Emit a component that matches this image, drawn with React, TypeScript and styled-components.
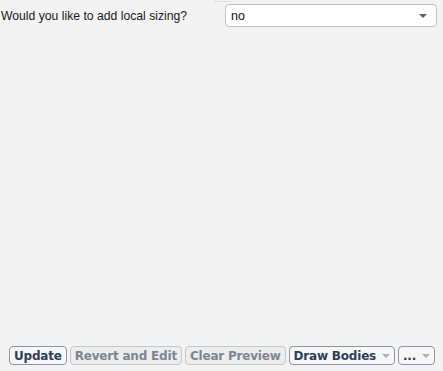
import React from "react";
import styled, { createGlobalStyle } from "styled-components";

const Global = createGlobalStyle`
  html, body { margin: 0; padding: 0; background: #f3f3f3; }
  body { width: 443px; height: 371px; overflow: hidden; font-family: "DejaVu Sans", "Liberation Sans", sans-serif; }
  #root { height: 371px; }
`;

const Page = styled.div`
  height: 371px;
  display: flex;
  flex-direction: column;
  background: #f3f3f3;
  position: relative;
`;

const Grip = styled.div`
  position: absolute;
  top: 1px;
  left: 215px;
  width: 16px;
  border-top: 1px dotted #c8c8c8;
`;

const Row = styled.div`
  display: flex;
  align-items: center;
  padding: 4px 6px 0 0;
`;

const Label = styled.div`
  width: 224px;
  font-family: "Liberation Sans", Arial, sans-serif;
  font-size: 12.2px;
  color: #1a1a1a;
  padding-left: 1px;
`;

const Select = styled.div`
  flex: 1;
  height: 21px;
  border: 1px solid #b9c3cf;
  border-radius: 4px;
  background: #ffffff;
  display: flex;
  align-items: center;
  justify-content: space-between;
  padding: 0 9px 0 5px;
  font-family: "Liberation Sans", Arial, sans-serif;
  font-size: 12.5px;
  color: #111;
`;

const Arrow = styled.span<{ $color?: string }>`
  width: 0;
  height: 0;
  border-left: 4px solid transparent;
  border-right: 4px solid transparent;
  border-top: 4px solid ${(p) => p.$color || "#606060"};
`;

const Spacer = styled.div`
  flex: 1;
`;

const Bar = styled.div`
  display: flex;
  gap: 3px;
  padding: 0 0 6px 9px;
`;

const Button = styled.div<{ $disabled?: boolean }>`
  height: 17px;
  border: 1px solid ${(p) => (p.$disabled ? "#c4c8ce" : "#8b96a6")};
  border-radius: 4px;
  background: ${(p) => (p.$disabled ? "#eceded" : "#f7f7f7")};
  color: ${(p) => (p.$disabled ? "#7c8592" : "#2c3e5e")};
  font-weight: bold;
  font-size: 12px;
  display: flex;
  align-items: center;
  gap: 6px;
  padding: 0 4px;
  letter-spacing: -0.2px;
`;

export default function App() {
  return (
    <>
      <Global />
      <Page>
        <Grip />
        <Row>
          <Label>Would you like to add local sizing?</Label>
          <Select>
            <span>no</span>
            <Arrow />
          </Select>
        </Row>
        <Spacer />
        <Bar>
          <Button>Update</Button>
          <Button $disabled>Revert and Edit</Button>
          <Button $disabled>Clear Preview</Button>
          <Button>
            Draw Bodies <Arrow $color="#a8b0bc" />
          </Button>
          <Button>
            ... <Arrow $color="#a8b0bc" />
          </Button>
        </Bar>
      </Page>
    </>
  );
}
